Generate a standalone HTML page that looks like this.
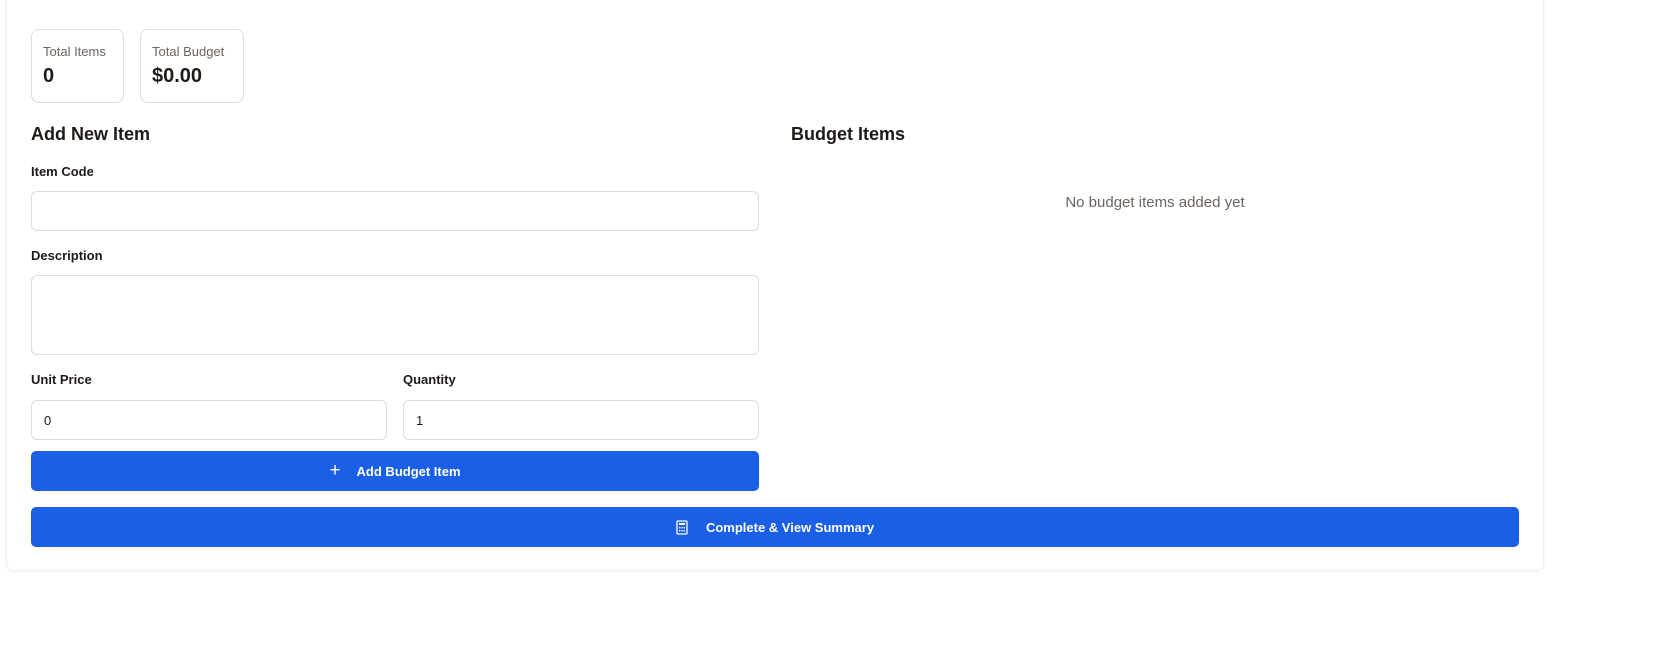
<!DOCTYPE html>
<html><head><style>
*{box-sizing:border-box;margin:0;padding:0}
body{width:1680px;height:662px;background:#fff;font-family:"Liberation Sans",sans-serif;color:#1f1a17;position:relative;overflow:hidden}
.card{position:absolute;left:6px;top:-8px;width:1538px;height:579px;border:1px solid #f0f0f0;border-radius:8px;box-shadow:0 1px 3px rgba(0,0,0,.05)}
.abs{position:absolute}
.stat{position:absolute;top:29px;height:74px;border:1px solid #ddd;border-radius:8px;padding:14px 11px}
.stat .l{font-size:13px;color:#6b6460}
.stat .v{font-size:20px;font-weight:bold;margin-top:6px}
h2{position:absolute;font-size:18px;font-weight:bold}
.lab{position:absolute;font-size:13px;font-weight:bold}
.inp{position:absolute;border:1px solid #ddd;border-radius:6px;background:#fff;font-size:13px;padding-left:12px;display:flex;align-items:center}
.btn{position:absolute;background:#1b5fe6;border-radius:5px;color:#fff;font-weight:bold;font-size:13px;display:flex;align-items:center;justify-content:center}
</style></head><body>
<div class="card"></div>
<div class="stat" style="left:31px;width:93px"><div class="l">Total Items</div><div class="v">0</div></div>
<div class="stat" style="left:140px;width:104px"><div class="l">Total Budget</div><div class="v">$0.00</div></div>
<h2 style="left:31px;top:124px">Add New Item</h2>
<h2 style="left:791px;top:124px">Budget Items</h2>
<div class="abs" style="left:791px;width:728px;top:194px;text-align:center;font-size:15px;color:#6b6460">No budget items added yet</div>
<div class="lab" style="left:31px;top:164px">Item Code</div>
<div class="inp" style="left:31px;top:191px;width:728px;height:40px"></div>
<div class="lab" style="left:31px;top:248px">Description</div>
<div class="inp" style="left:31px;top:275px;width:728px;height:80px"></div>
<div class="lab" style="left:31px;top:372px">Unit Price</div>
<div class="lab" style="left:403px;top:372px">Quantity</div>
<div class="inp" style="left:31px;top:400px;width:356px;height:40px">0</div>
<div class="inp" style="left:403px;top:400px;width:356px;height:40px">1</div>
<div class="btn" style="left:31px;top:451px;width:728px;height:40px"><span style="font-size:19px;font-weight:normal;margin-right:16px">+</span>Add Budget Item</div>
<div class="btn" style="left:31px;top:507px;width:1488px;height:40px"><svg width="12" height="15" viewBox="0 0 12 15" style="margin-right:18px"><rect x="1" y="1" width="10" height="13" rx="1" fill="none" stroke="#fff" stroke-width="1.3"/><rect x="3" y="3" width="6" height="2" fill="#fff"/><g fill="#fff"><rect x="3" y="7" width="1.4" height="1.4"/><rect x="5.3" y="7" width="1.4" height="1.4"/><rect x="7.6" y="7" width="1.4" height="1.4"/><rect x="3" y="10" width="1.4" height="1.4"/><rect x="5.3" y="10" width="1.4" height="1.4"/><rect x="7.6" y="10" width="1.4" height="1.4"/></g></svg>Complete &amp; View Summary</div>
</body></html>
